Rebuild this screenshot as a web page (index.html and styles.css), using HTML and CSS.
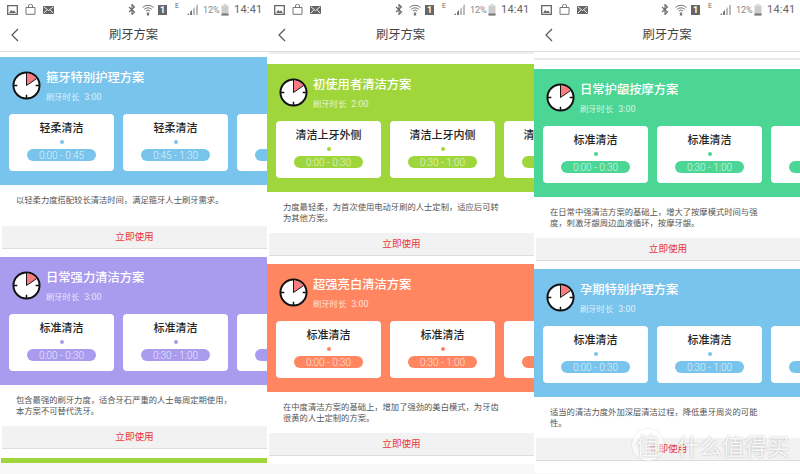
FILE: index.html
```html
<!DOCTYPE html>
<html lang="zh-CN">
<head>
  <meta charset="UTF-8" />
  <meta name="viewport" content="width=device-width, initial-scale=1.0" />
  <title>刷牙方案</title>
  <link rel="stylesheet" href="styles.css">
</head>
<body>
  <!-- shared icons -->
  <svg class="defs" width="0" height="0">
    <symbol id="i-image" viewBox="0 0 11 10">
      <path d="M.7.7h9.6v8.6H.7z" fill="none" stroke="#666" stroke-width="1.3"/>
      <path d="M2 8l2.2-3 1.6 1.6 1.2-1L9 8z" fill="#666"/>
    </symbol>
    <symbol id="i-bag" viewBox="0 0 11 11">
      <path d="M1 3.5h9v6.8H1z" fill="none" stroke="#777" stroke-width="1"/>
      <path d="M3.5 3.5V2a2 2 0 0 1 4 0v1.500" fill="none" stroke="#777" stroke-width="1"/>
    </symbol>
    <symbol id="i-mail" viewBox="0 0 11 8">
      <path d="M0 0h11v8H0z" fill="#666"/>
      <path d="M.8.8l4.700 3.700L10.200.8M.8 7.200l3-3.200M10.200 7.200l-3-3.200" fill="none" stroke="#fff" stroke-width=".9"/>
    </symbol>
    <symbol id="i-bt" viewBox="0 0 8 11">
      <path d="M1 3l5.500 5L4 10.500V.5L6.500 3 1 8" fill="none" stroke="#666" stroke-width="1.100"/>
    </symbol>
    <symbol id="i-wifi" viewBox="0 0 12 12">
      <path d="M.5 3.500a8 8 0 0 1 11 0M2.200 5.300a5.600 5.600 0 0 1 7.600 0M3.800 7a3.200 3.200 0 0 1 4.400 0" fill="none" stroke="#777" stroke-width="1"/>
      <path d="M4.800 8.500h2.400v3H4.800z" fill="#777"/>
    </symbol>
    <symbol id="i-signal" viewBox="0 0 11 11">
      <path d="M0 11l2-2v2zM3 11V8l2-2v5z" fill="#777"/>
      <path d="M6 11V5l2-2v8zM9 11V2l2-2v11z" fill="#bbb"/>
    </symbol>
    <symbol id="i-batt" viewBox="0 0 8 12">
      <path d="M2.500 0h3v1h-3zM.5 1.500h7v10h-7z" fill="#ccc"/>
      <path d="M.5 9.500h7v2h-7z" fill="#777"/>
    </symbol>
    <symbol id="i-clock" viewBox="0 0 30 30">
      <circle cx="15" cy="15" r="13.500" fill="#fff" stroke="#111" stroke-width="2"/>
      <path d="M15 15V2.500a12.500 12.500 0 0 1 10.200 5.300z" fill="#f97a7f"/>
      <path d="M15 15V2M15 15l10.500-7.200" fill="none" stroke="#111" stroke-width="1"/>
      <path d="M15 24.500V28M2 15h3.500M24.500 15H28" stroke="#111" stroke-width="1.500"/>
    </symbol>
  </svg>

  <div class="screens">

    <section class="screen">
      <div class="statusbar">
        <svg class="st-image"><use href="#i-image"/></svg>
        <svg class="st-bag"><use href="#i-bag"/></svg>
        <svg class="st-mail"><use href="#i-mail"/></svg>
        <span class="st-space"></span>
        <svg class="st-bt"><use href="#i-bt"/></svg>
        <svg class="st-wifi"><use href="#i-wifi"/></svg>
        <span class="st-sim">1</span>
        <span class="st-e">E</span>
        <svg class="st-signal"><use href="#i-signal"/></svg>
        <span class="st-pct">12%</span>
        <svg class="st-batt"><use href="#i-batt"/></svg>
        <span class="st-time">14:41</span>
      </div>
      <header class="navbar">
        <svg class="back" viewBox="0 0 9 14"><path d="M8 1L2 7l6 6" fill="none" stroke="#555" stroke-width="1.200"/></svg>
        <h1>刷牙方案</h1>
      </header>
      <div class="lead lead-a"></div>

      <article class="plan plan-blue">
        <div class="plan-head">
          <div class="plan-info">
            <svg class="clock"><use href="#i-clock"/></svg>
            <div>
              <h2>箍牙特别护理方案</h2>
              <p class="duration">刷牙时长<span>3:00</span></p>
            </div>
          </div>
          <div class="steps">
            <div class="step"><h3>轻柔清洁</h3><i class="dot"></i><span class="pill">0:00 - 0:45</span></div>
            <div class="step"><h3>轻柔清洁</h3><i class="dot"></i><span class="pill">0:45 - 1:30</span></div>
            <div class="step"><h3>轻柔清洁</h3><i class="dot"></i><span class="pill">1:30 - 2:15</span></div>
          </div>
        </div>
        <p class="desc">以轻柔力度搭配较长清洁时间，满足箍牙人士刷牙需求。</p>
        <button class="use">立即使用</button>
      </article>

      <article class="plan plan-purple">
        <div class="plan-head">
          <div class="plan-info">
            <svg class="clock"><use href="#i-clock"/></svg>
            <div>
              <h2>日常强力清洁方案</h2>
              <p class="duration">刷牙时长<span>3:00</span></p>
            </div>
          </div>
          <div class="steps">
            <div class="step"><h3>标准清洁</h3><i class="dot"></i><span class="pill">0:00 - 0:30</span></div>
            <div class="step"><h3>标准清洁</h3><i class="dot"></i><span class="pill">0:30 - 1:00</span></div>
            <div class="step"><h3>标准清洁</h3><i class="dot"></i><span class="pill">1:00 - 1:30</span></div>
          </div>
        </div>
        <p class="desc">包含最强的刷牙力度，适合牙石严重的人士每周定期使用，<br>本方案不可替代洗牙。</p>
        <button class="use">立即使用</button>
      </article>

      <div class="peek"></div>
      <div class="foot"></div>
    </section>

    <section class="screen">
      <div class="statusbar">
        <svg class="st-image"><use href="#i-image"/></svg>
        <svg class="st-bag"><use href="#i-bag"/></svg>
        <svg class="st-mail"><use href="#i-mail"/></svg>
        <span class="st-space"></span>
        <svg class="st-bt"><use href="#i-bt"/></svg>
        <svg class="st-wifi"><use href="#i-wifi"/></svg>
        <span class="st-sim">1</span>
        <span class="st-e">E</span>
        <svg class="st-signal"><use href="#i-signal"/></svg>
        <span class="st-pct">12%</span>
        <svg class="st-batt"><use href="#i-batt"/></svg>
        <span class="st-time">14:41</span>
      </div>
      <header class="navbar">
        <svg class="back" viewBox="0 0 9 14"><path d="M8 1L2 7l6 6" fill="none" stroke="#555" stroke-width="1.200"/></svg>
        <h1>刷牙方案</h1>
      </header>
      <div class="lead lead-b"></div>

      <article class="plan plan-lime">
        <div class="plan-head">
          <div class="plan-info">
            <svg class="clock"><use href="#i-clock"/></svg>
            <div>
              <h2>初使用者清洁方案</h2>
              <p class="duration">刷牙时长<span>2:00</span></p>
            </div>
          </div>
          <div class="steps">
            <div class="step"><h3>清洁上牙外侧</h3><i class="dot"></i><span class="pill">0:00 - 0:30</span></div>
            <div class="step"><h3>清洁上牙内侧</h3><i class="dot"></i><span class="pill">0:30 - 1:00</span></div>
            <div class="step"><h3>清洁下牙外侧</h3><i class="dot"></i><span class="pill">1:00 - 1:30</span></div>
          </div>
        </div>
        <p class="desc">力度最轻柔，为首次使用电动牙刷的人士定制，适应后可转<br>为其他方案。</p>
        <button class="use">立即使用</button>
      </article>

      <article class="plan plan-orange">
        <div class="plan-head">
          <div class="plan-info">
            <svg class="clock"><use href="#i-clock"/></svg>
            <div>
              <h2>超强亮白清洁方案</h2>
              <p class="duration">刷牙时长<span>3:00</span></p>
            </div>
          </div>
          <div class="steps">
            <div class="step"><h3>标准清洁</h3><i class="dot"></i><span class="pill">0:00 - 0:30</span></div>
            <div class="step"><h3>标准清洁</h3><i class="dot"></i><span class="pill">0:30 - 1:00</span></div>
            <div class="step"><h3>标准清洁</h3><i class="dot"></i><span class="pill">1:00 - 1:30</span></div>
          </div>
        </div>
        <p class="desc">在中度清洁方案的基础上，增加了强劲的美白模式，为牙齿<br>很黄的人士定制的方案。</p>
        <button class="use">立即使用</button>
      </article>

      <div class="foot"></div>
    </section>

    <section class="screen">
      <div class="statusbar">
        <svg class="st-image"><use href="#i-image"/></svg>
        <svg class="st-bag"><use href="#i-bag"/></svg>
        <svg class="st-mail"><use href="#i-mail"/></svg>
        <span class="st-space"></span>
        <svg class="st-bt"><use href="#i-bt"/></svg>
        <svg class="st-wifi"><use href="#i-wifi"/></svg>
        <span class="st-sim">1</span>
        <span class="st-e">E</span>
        <svg class="st-signal"><use href="#i-signal"/></svg>
        <span class="st-pct">12%</span>
        <svg class="st-batt"><use href="#i-batt"/></svg>
        <span class="st-time">14:41</span>
      </div>
      <header class="navbar">
        <svg class="back" viewBox="0 0 9 14"><path d="M8 1L2 7l6 6" fill="none" stroke="#555" stroke-width="1.200"/></svg>
        <h1>刷牙方案</h1>
      </header>
      <div class="lead lead-c"></div>

      <article class="plan plan-teal">
        <div class="plan-head">
          <div class="plan-info">
            <svg class="clock"><use href="#i-clock"/></svg>
            <div>
              <h2>日常护龈按摩方案</h2>
              <p class="duration">刷牙时长<span>3:00</span></p>
            </div>
          </div>
          <div class="steps">
            <div class="step"><h3>标准清洁</h3><i class="dot"></i><span class="pill">0:00 - 0:30</span></div>
            <div class="step"><h3>标准清洁</h3><i class="dot"></i><span class="pill">0:30 - 1:00</span></div>
            <div class="step"><h3>标准清洁</h3><i class="dot"></i><span class="pill">1:00 - 1:30</span></div>
          </div>
        </div>
        <p class="desc">在日常中强清洁方案的基础上，增大了按摩模式时间与强<br>度，刺激牙龈周边血液循环，按摩牙龈。</p>
        <button class="use">立即使用</button>
      </article>

      <article class="plan plan-blue">
        <div class="plan-head">
          <div class="plan-info">
            <svg class="clock"><use href="#i-clock"/></svg>
            <div>
              <h2>孕期特别护理方案</h2>
              <p class="duration">刷牙时长<span>3:00</span></p>
            </div>
          </div>
          <div class="steps">
            <div class="step"><h3>标准清洁</h3><i class="dot"></i><span class="pill">0:00 - 0:30</span></div>
            <div class="step"><h3>标准清洁</h3><i class="dot"></i><span class="pill">0:30 - 1:00</span></div>
            <div class="step"><h3>标准清洁</h3><i class="dot"></i><span class="pill">1:00 - 1:30</span></div>
          </div>
        </div>
        <p class="desc">适当的清洁力度外加深层清洁过程，降低患牙周炎的可能<br>性。</p>
        <button class="use">立即使用</button>
      </article>

      <div class="foot"></div>
    </section>

  </div>

  <!-- image watermark, sits over the last screen -->
  <div class="watermark"><span class="wm-badge">值</span><span class="wm-name">什么值得买</span></div>
</body>
</html>
```

FILE: styles.css
```css
* {
  box-sizing: border-box;
}
html, body {
  margin: 0;
  height: 100%;
  overflow: hidden;
}
body {
  font-family: Roboto, "Noto Sans CJK SC", sans-serif;
  background: #fff;
  position: relative;
}
.defs {
  position: absolute;
}
.screens {
  display: grid;
  grid-template-columns: 267px 267px 266px;
  height: 474px;
}
.screen {
  display: flex;
  flex-direction: column;
  height: 474px;
  overflow: hidden;
}

/* status bar */
.statusbar {
  display: flex;
  align-items: center;
  flex: none;
  height: 29px;
  padding: 0 5px 10px 7px;
  color: #666;
}
.statusbar svg {
  flex: none;
}
.st-image { width: 11px; height: 10px; margin-right: 7px; }
.st-bag { width: 11px; height: 11px; margin-right: 7px; }
.st-mail { width: 11px; height: 8px; }
.st-space { flex: 1; }
.st-bt { width: 8px; height: 11px; margin-right: 6px; }
.st-wifi { width: 12px; height: 12px; margin-right: 4px; }
.st-sim {
  width: 9px;
  height: 10px;
  margin-right: 8px;
  background: #666;
  color: #fff;
  font-size: 9px;
  font-weight: 700;
  line-height: 10px;
  text-align: center;
}
.st-e {
  width: 5px;
  margin: -7px 7px 0 0;
  font-size: 7px;
  line-height: 8px;
}
.st-signal { width: 11px; height: 11px; margin-right: 5px; }
.st-pct {
  width: 15px;
  margin-right: 3px;
  font-size: 9px;
  color: #888;
  white-space: nowrap;
}
.st-batt { width: 8px; height: 12px; margin-right: 5px; }
.st-time {
  width: 28px;
  font-size: 11px;
  letter-spacing: .2px;
  color: #666;
  white-space: nowrap;
}

/* title bar */
.navbar {
  display: flex;
  align-items: center;
  justify-content: center;
  flex: none;
  position: relative;
  height: 23px;
  border-bottom: 1px solid #ddd;
}
.navbar h1 {
  margin: 0 0 11px;
  font-size: 12.300px;
  line-height: 14px;
  font-weight: 400;
  color: #444;
}
.back {
  position: absolute;
  left: 10px;
  top: -1px;
  width: 9px;
  height: 14px;
}

/* what is left of the previous card above the first one */
.lead {
  flex: none;
}
.lead-a { height: 5px; }
.lead-b {
  height: 12px;
  margin-left: 2px;
  border-top: 2px solid #eee;
}
.lead-c {
  height: 17px;
  border-top: 6px solid #fff;
  background: linear-gradient(#e9e9e9 2px, #fff 2px);
}

/* plan card */
.plan {
  flex: none;
  height: 200px;
  display: flex;
  flex-direction: column;
}
.plan-head {
  height: 128px;
  padding: 14px 0 0 9px;
  background: var(--plan);
  overflow: hidden;
}
.plan-info {
  display: flex;
  gap: 5px;
  margin-left: 3px;
  color: #fff;
}
.clock {
  flex: none;
  width: 29px;
  height: 29px;
}
.plan-info h2 {
  margin: 0;
  font-size: 12.300px;
  line-height: 15px;
  font-weight: 500;
  white-space: nowrap;
}
.duration {
  margin: 5px 0 0;
  font-size: 8.300px;
  line-height: 12px;
  opacity: .75;
}
.duration span {
  margin-left: 5px;
  font-size: 9px;
}
.steps {
  display: flex;
  gap: 9px;
  margin-top: 11px;
}
.step {
  flex: none;
  display: flex;
  flex-direction: column;
  align-items: center;
  width: 105px;
  height: 57px;
  padding-top: 7px;
  background: #fff;
  border-radius: 4px;
}
.step h3 {
  margin: 0;
  font-size: 11px;
  line-height: 16px;
  font-weight: 500;
  color: #222;
  white-space: nowrap;
}
.dot {
  width: 4px;
  height: 4px;
  margin-top: 3px;
  border-radius: 50%;
  background: var(--plan);
}
.pill {
  width: 69px;
  height: 12px;
  margin-top: 5px;
  border-radius: 6px;
  background: var(--plan);
  color: rgba(255, 255, 255, .8);
  font-size: 10px;
  font-weight: 300;
  line-height: 13px;
  text-align: center;
}
.desc {
  height: 41px;
  margin: 0;
  padding: 10px 0 0 16px;
  font-size: 8.300px;
  line-height: 10.500px;
  color: #555;
  white-space: nowrap;
}
.use {
  display: block;
  width: calc(100% - 2px);
  height: 23px;
  margin-left: 2px;
  padding: 0 0 3px;
  background: #f2f2f2;
  border: none;
  border-bottom: 1px solid #ddd;
  color: #e8383d;
  font-family: inherit;
  font-size: 9.600px;
}

.plan-blue { --plan: #78c4ec; }
.plan-purple { --plan: #a99bed; }
.plan-lime { --plan: #9fd63c; }
.plan-orange { --plan: #ff8660; }
.plan-teal { --plan: #4cd695; }

/* bottom of each screen */
.peek {
  flex: none;
  height: 5px;
  margin: 1px 0 0 1px;
  background: #9fd63c;
}
.foot {
  flex: 1;
  background: #f8f8f8;
}
.screen:nth-child(3) .foot {
  margin-top: 4px;
}

.watermark {
  position: absolute;
  left: 632px;
  top: 429px;
  display: flex;
  align-items: center;
  gap: 13px;
  line-height: 32px;
  color: rgba(255, 255, 255, .9);
  font-family: "Noto Sans CJK SC", sans-serif;
  text-shadow: 0 0 2px rgba(0, 0, 0, .3);
}
.wm-badge {
  width: 32px;
  height: 32px;
  border-radius: 50%;
  background: rgba(255, 255, 255, .5);
  box-shadow: 0 0 2px rgba(0, 0, 0, .15);
  font-size: 24px;
  text-align: center;
}
.wm-name {
  font-size: 22.500px;
}
```
